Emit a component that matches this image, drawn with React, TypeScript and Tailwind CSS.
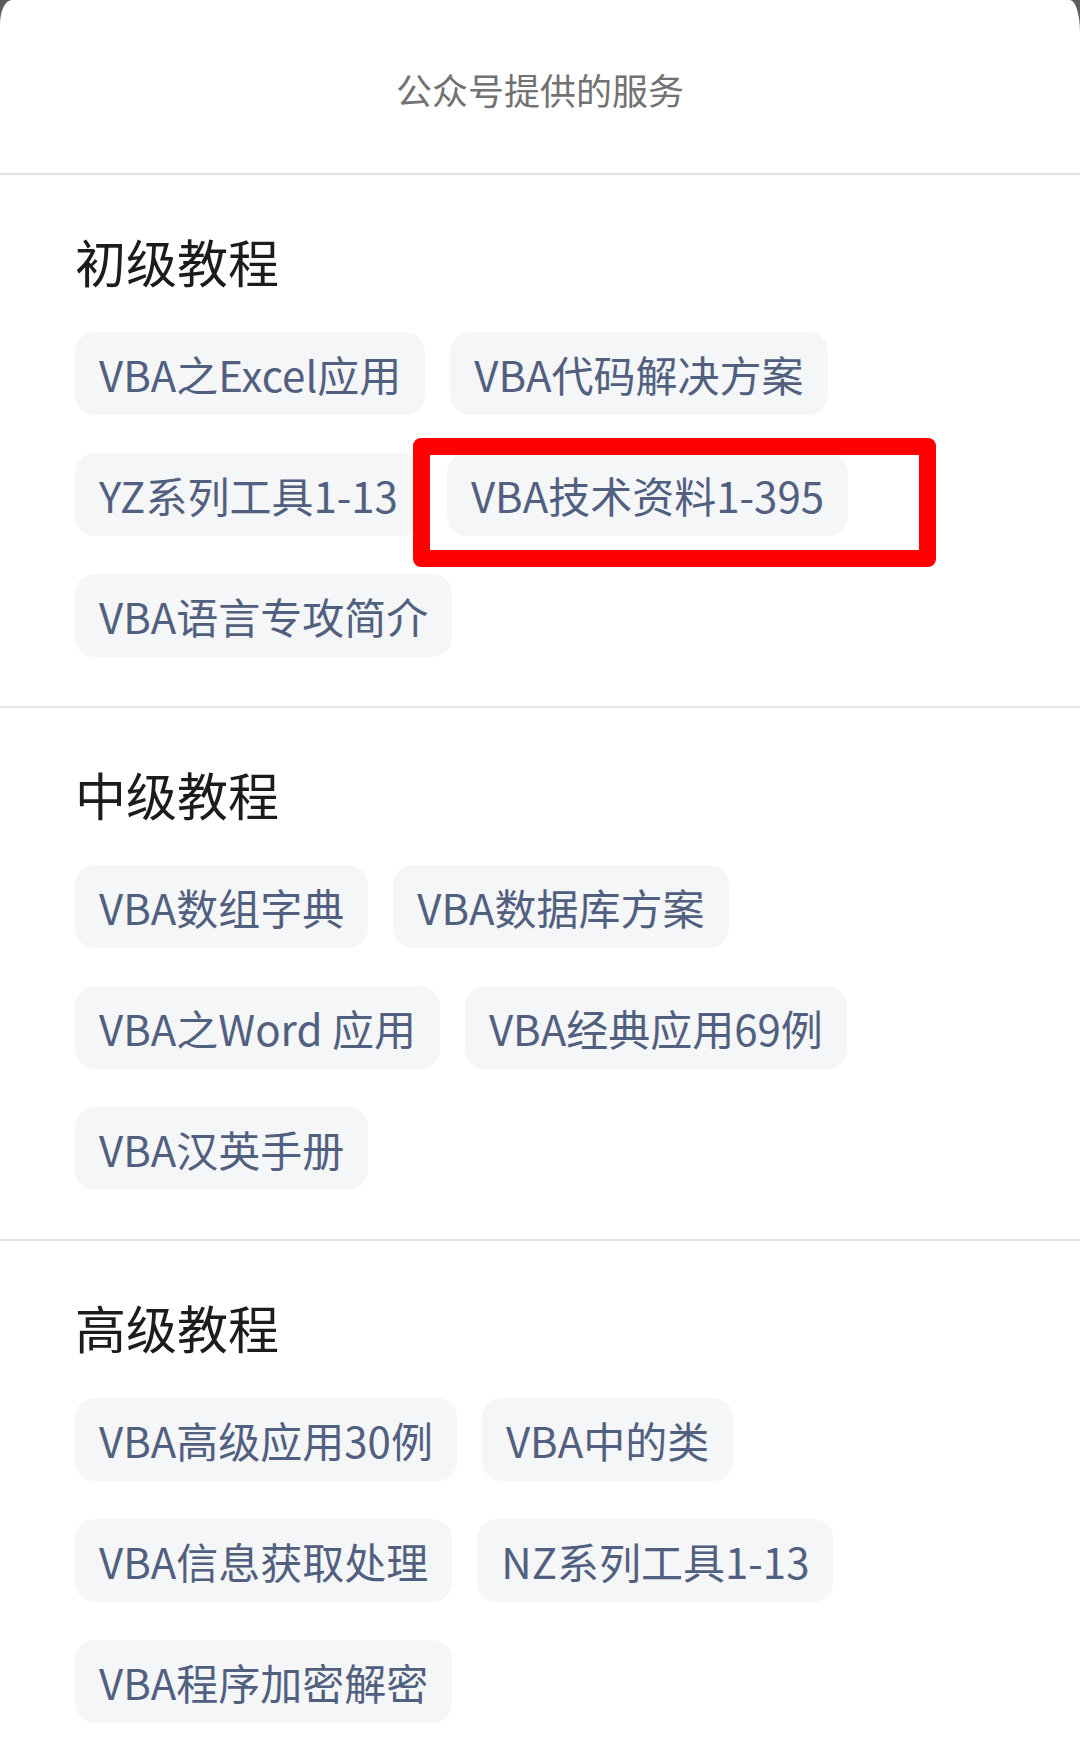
import React from "react";

const sections: { title: string; rows: string[][] }[] = [
  {
    title: "初级教程",
    rows: [
      ["VBA之Excel应用", "VBA代码解决方案"],
      ["YZ系列工具1-13", "VBA技术资料1-395"],
      ["VBA语言专攻简介"],
    ],
  },
  {
    title: "中级教程",
    rows: [
      ["VBA数组字典", "VBA数据库方案"],
      ["VBA之Word 应用", "VBA经典应用69例"],
      ["VBA汉英手册"],
    ],
  },
  {
    title: "高级教程",
    rows: [
      ["VBA高级应用30例", "VBA中的类"],
      ["VBA信息获取处理", "NZ系列工具1-13"],
      ["VBA程序加密解密"],
    ],
  },
];

function Chip({ label }: { label: string }) {
  return (
    <div className="flex h-[83px] items-center whitespace-pre rounded-[20px] bg-[#f5f6f8] px-[24px] text-[42px] leading-none text-[#52607f]">
      {label}
    </div>
  );
}

export default function App() {
  return (
    <div
      className="w-[1080px] h-[1747px] bg-[#5c5c5c] overflow-hidden"
      style={{ fontFamily: '"Noto Sans CJK SC", "Noto Sans", sans-serif' }}
    >
      <div className="relative h-full w-full bg-white rounded-tl-[12px_24px] rounded-tr-[10px_33px]">
        <header className="flex h-[173px] items-center justify-center pt-[5px] text-[36px] leading-none text-[#727272]">
          公众号提供的服务
        </header>
        {sections.map((s, i) => (
          <section
            key={s.title}
            className={`border-t-2 border-[#e3e3e3] pl-[75px] pt-[61px] ${i < 2 ? "pb-[49px]" : "pb-[40px]"}`}
          >
            <h2 className="text-[51px] leading-none font-normal text-[#1c1c1c]">{s.title}</h2>
            <div className="mt-[45px] flex flex-col gap-[38px]">
              {s.rows.map((row, j) => (
                <div key={j} className="flex gap-[25px]">
                  {row.map((c) => (
                    <Chip key={c} label={c} />
                  ))}
                </div>
              ))}
            </div>
          </section>
        ))}
        <div className="pointer-events-none absolute left-[413px] top-[438px] h-[129px] w-[523px] rounded-[8px] border-[17px] border-[#ff0000]" />
      </div>
    </div>
  );
}
